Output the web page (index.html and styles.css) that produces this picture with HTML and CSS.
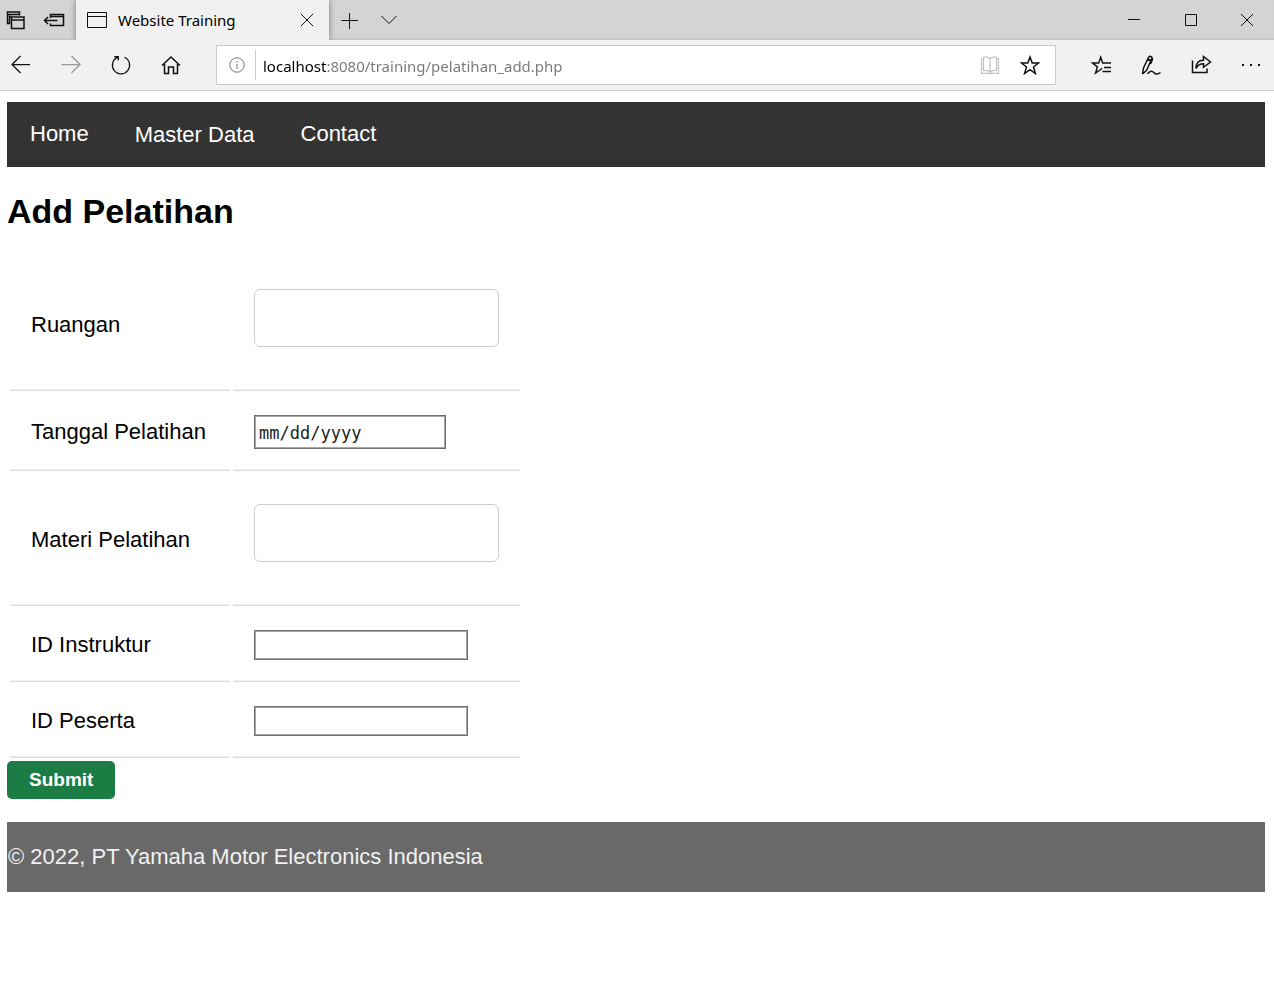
FILE: index.html
```html
<!DOCTYPE html>
<html lang="en">
<head>
<meta charset="utf-8">
<title>Website Training</title>
<link rel="stylesheet" href="styles.css">
</head>
<body>
<div class="tabstrip">
  <div class="tab-tools">
    <button class="icon-btn tab-tool" aria-label="Tabs you've set aside">
      <svg width="20" height="20" viewBox="0 0 20 20"><path class="bold" d="M3.500 9V13.500H1.500V2H13.500V5.500M1.500 4.500H13.500M3.500 13.500V6.500H5.500M5.500 7H18V18.500H5.500zM5.500 10H18"/></svg>
    </button>
    <button class="icon-btn tab-tool" aria-label="Set these tabs aside">
      <svg width="22" height="20" viewBox="0 0 22 20"><path class="bold" d="M7.500 8V4.500H20.500V15.500H7.500V13.500M7.500 6.500H20.500M1.500 10.500H14.500M5 7L1.500 10.500L5 14"/></svg>
    </button>
  </div>
  <div class="tab">
    <svg class="page-icon" width="22" height="18" viewBox="0 0 22 18"><path d="M1.500 1.500H20.500V16.500H1.500zM1.500 5.500H20.500"/></svg>
    <span class="tab-title">Website Training</span>
    <button class="icon-btn" aria-label="Close tab">
      <svg width="14" height="14" viewBox="0 0 14 14"><path d="M.8.800L13.200 13.200M13.200.800L.8 13.200"/></svg>
    </button>
  </div>
  <button class="icon-btn strip-btn" aria-label="New tab">
    <svg width="18" height="18" viewBox="0 0 18 18"><path d="M9.500 2V18M1.500 9.500H18"/></svg>
  </button>
  <button class="icon-btn strip-btn" aria-label="Show tab previews">
    <svg width="18" height="18" viewBox="0 0 18 18"><path d="M1.500 5L9 12.500L16.500 5"/></svg>
  </button>
  <div class="window-buttons">
    <button class="icon-btn window-btn" aria-label="Minimize">
      <svg width="14" height="14" viewBox="0 0 14 14"><path d="M1 6.500H13"/></svg>
    </button>
    <button class="icon-btn window-btn" aria-label="Maximize">
      <svg width="14" height="14" viewBox="0 0 14 14"><path d="M1.500 1.500H12.500V12.500H1.500z"/></svg>
    </button>
    <button class="icon-btn window-btn" aria-label="Close">
      <svg width="14" height="14" viewBox="0 0 14 14"><path d="M1 1L13 13M13 1L1 13"/></svg>
    </button>
  </div>
</div>

<div class="toolbar">
  <div class="nav-buttons">
    <button class="icon-btn tool-btn" aria-label="Back">
      <svg width="22" height="22" viewBox="0 0 22 22"><path class="medium" d="M20 10.500H2M10.500 2L2 10.500L10.500 19"/></svg>
    </button>
    <button class="icon-btn tool-btn faded" aria-label="Forward" disabled>
      <svg width="22" height="22" viewBox="0 0 22 22"><path class="medium" d="M1.500 10.500H20M11.500 2L20 10.500L11.500 19"/></svg>
    </button>
    <button class="icon-btn tool-btn" aria-label="Refresh">
      <svg width="22" height="22" viewBox="0 0 22 22"><path class="medium" d="M14.500 3.300A8.600 8.600 0 1 1 7.800 3.200L5.200 5M4.200 2.500H8.300V6.500"/></svg>
    </button>
    <button class="icon-btn tool-btn" aria-label="Home">
      <svg width="22" height="22" viewBox="0 0 22 22"><path class="bold" d="M2 11.500L11 3L20 11.500M4.500 10V19.500H8.500V13H13.500V19.500H17.500V10"/></svg>
    </button>
  </div>
  <div class="address">
    <svg class="info-icon" width="16" height="16" viewBox="0 0 16 16"><circle cx="8" cy="8" r="7.200"/><path d="M8 7V12M8 4V5.500"/></svg>
    <input class="url" type="text" aria-label="Address" value="localhost:8080/training/pelatihan_add.php">
    <button class="icon-btn address-btn pale" aria-label="Reading view">
      <svg width="20" height="20" viewBox="0 0 20 20"><path class="medium" d="M10 3.500V17.500M10 3.500C8 1.700 5 1.700 3.500 2.500V15.500C6 15 8.500 15.500 10 17C11.500 15.500 14 15 16.500 15.500V2.500C15 1.700 12 1.700 10 3.500M3.500 3.500H1.500V18.300H18.500V3.500H16.500"/></svg>
    </button>
    <button class="icon-btn address-btn" aria-label="Add to favorites">
      <svg width="20" height="20" viewBox="0 0 20 20"><path class="bold" d="M10 2L12.200 8H18.600L13.500 12L15.400 18.500L10 14.600L4.600 18.500L6.500 12L1.400 8H7.800z"/></svg>
    </button>
  </div>
  <div class="actions">
    <button class="icon-btn action-btn" aria-label="Favorites">
      <svg width="22" height="20" viewBox="0 0 22 20"><path class="bold" d="M13 8H21M14 12.500H21M12.500 16.500H21M13 8H12.700L10.700 2.300L8.700 8H2.600L7.400 11.800L5.600 18L10.700 14.500L12 13.300"/></svg>
    </button>
    <button class="icon-btn action-btn" aria-label="Add notes">
      <svg width="22" height="22" viewBox="0 0 22 22"><path class="bold" d="M2.500 20L3.500 14L8.500 3.500C9.500 1.500 12.500 2.500 11.700 4.800L6.500 16.500L2.500 20M7.800 5L11 6.500M11.500 3.500C13.300 4 12.500 6 10.500 10M7.500 19.800C10 16.500 12 16.500 13.800 18.500S18 20.500 20.500 18.500"/></svg>
    </button>
    <button class="icon-btn action-btn" aria-label="Share">
      <svg width="22" height="22" viewBox="0 0 22 22"><path class="bold" d="M1.500 6.500V18.500H16V14.500M5 14.500C5 9.500 7.500 6.300 12.500 6.300V2.500L19.500 8L12.500 13.300V9.800C9 9.800 7 10.500 5 14.500z"/></svg>
    </button>
    <button class="icon-btn action-btn" aria-label="Settings and more">
      <svg width="20" height="20" viewBox="0 0 20 20"><path class="dots" d="M1 9h2v2h-2zM9 9h2v2h-2zM17 9h2v2h-2z"/></svg>
    </button>
  </div>
</div>

<main class="page">
  <nav class="menu">
    <a href="#">Home</a>
    <button class="menu-drop" type="button">Master Data</button>
    <a href="#">Contact</a>
  </nav>

  <h2 class="title">Add Pelatihan</h2>

  <form class="form">
    <table class="fields">
      <tr>
        <td class="label-cell"><label for="ruangan">Ruangan</label></td>
        <td><input class="field-wide" type="text" id="ruangan"></td>
      </tr>
      <tr>
        <td class="label-cell"><label for="tanggal">Tanggal Pelatihan</label></td>
        <td><input class="field field-date" type="date" id="tanggal"></td>
      </tr>
      <tr>
        <td class="label-cell"><label for="materi">Materi Pelatihan</label></td>
        <td><input class="field-wide" type="text" id="materi"></td>
      </tr>
      <tr>
        <td class="label-cell"><label for="instruktur">ID Instruktur</label></td>
        <td><input class="field field-id" type="number" id="instruktur"></td>
      </tr>
      <tr>
        <td class="label-cell"><label for="peserta">ID Peserta</label></td>
        <td><input class="field field-id" type="number" id="peserta"></td>
      </tr>
    </table>
    <button class="submit" type="submit">Submit</button>
  </form>

  <footer class="footer">© 2022, PT Yamaha Motor Electronics Indonesia</footer>
</main>
</body>
</html>
```
FILE: styles.css
```css
* {
  box-sizing: border-box;
}

body {
  margin: 0;
  background: #fff;
  color: #000;
  font-family: "Liberation Sans", Arial, sans-serif;
  font-size: 22px;
}

svg {
  display: block;
  flex: none;
  fill: none;
  stroke: #111;
  stroke-width: 1;
}

.bold {
  stroke-width: 1.5;
}

.medium {
  stroke-width: 1.25;
}

.dots {
  fill: #111;
  stroke: none;
}

.icon-btn {
  display: flex;
  align-items: center;
  justify-content: center;
  padding: 0;
  border: 0;
  background: none;
}

/* Browser tab strip */
.tabstrip {
  display: flex;
  height: 40px;
  background: #d4d4d4;
  box-shadow: inset 0 -2px 2px -1px #bbb;
}

.tab-tools {
  display: flex;
  width: 76px;
}

.tab-tool {
  width: 44px;
  height: 40px;
}

.tab-tool:first-child {
  width: 32px;
}

.tab {
  display: flex;
  align-items: center;
  width: 253px;
  padding: 0 15px 0 10px;
  background: #f1f1f1;
  box-shadow: 0 0 6px #777;
  clip-path: inset(0 -8px 0 -8px);
}

.page-icon {
  margin-right: 10px;
}

.tab-title {
  flex: 1;
  font-family: "Noto Sans", sans-serif;
  font-size: 15px;
  line-height: 20px;
}

.strip-btn {
  width: 40px;
  height: 40px;
}

.window-buttons {
  display: flex;
  margin-left: auto;
}

.window-btn {
  width: 57px;
  height: 40px;
}

.window-btn:last-child {
  width: 55px;
}

/* Browser toolbar */
.toolbar {
  display: flex;
  align-items: center;
  height: 51px;
  border-bottom: 1px solid #ccc;
  background: #f1f1f1;
}

.nav-buttons {
  display: flex;
  width: 216px;
  padding-left: 10px;
  gap: 28px;
}

.faded svg {
  stroke: #999;
}

.address {
  display: flex;
  flex: 1;
  align-items: center;
  height: 40px;
  padding: 0 15px 0 12px;
  border: 1px solid #ccc;
  background: #fff;
}

.info-icon {
  stroke: #777;
}

.url {
  flex: 1;
  min-width: 0;
  height: 30px;
  margin-left: 10px;
  padding: 2px 0 0 7px;
  border: 0;
  border-left: 1px solid #ccc;
  outline: 0;
  background: linear-gradient(to right, #000 71px, #777 71px) text;
  color: transparent;
  font-family: "Noto Sans", sans-serif;
  font-size: 15px;
}

.address-btn {
  width: 20px;
  height: 30px;
  margin-left: 20px;
}

.pale svg {
  stroke: #c4c4c4;
}

.actions {
  display: flex;
  align-items: center;
  width: 218px;
  padding: 0 13px 0 34px;
  justify-content: space-between;
}

/* Page */
.page {
  padding: 11px 9px 0 7px;
}

.menu {
  display: flex;
  height: 65px;
  background: #333;
}

.menu a,
.menu-drop {
  padding: 19px 23px 0;
  border: 0;
  background: none;
  color: #fff;
  font: inherit;
  line-height: 25px;
  text-decoration: none;
}

.menu-drop {
  display: flex;
  padding-top: 20px;
}

.title {
  margin: 24px 0 25px;
  font-size: 34px;
  line-height: 40px;
}

.fields {
  border-spacing: 3px;
}

.fields td {
  padding: 21px;
  border-bottom: 1px solid #ddd;
  box-shadow: inset 0 -1px #f0f0f0;
}

.fields .label-cell {
  width: 220px;
}

.field,
.field-wide {
  display: block;
  background: #fff;
  font: inherit;
}

.field-wide {
  width: 245px;
  height: 58px;
  margin: 9px 0 22px;
  padding: 16px 28px;
  border: 1px solid #ccc;
  border-radius: 6px;
}

.field {
  border: 1px solid #6f6f6f;
  box-shadow: inset 0 0 0 1px #a6a6a6;
}

.field-date {
  width: 192px;
  height: 34px;
  padding: 2px 4px 0;
  color: #222;
  font-family: "DejaVu Sans Mono", monospace;
  font-size: 17px;
}

.field-date::-webkit-calendar-picker-indicator {
  display: none;
}

.field-date::-webkit-datetime-edit-month-field,
.field-date::-webkit-datetime-edit-day-field,
.field-date::-webkit-datetime-edit-year-field {
  padding: 0;
}

.field-id {
  width: 214px;
  height: 30px;
}

.submit {
  display: block;
  height: 38px;
  padding: 0 22px;
  border: 0;
  border-radius: 5px;
  background: #1b7c44;
  color: #fff;
  font-family: inherit;
  font-size: 19px;
  font-weight: bold;
}

.footer {
  margin-top: 23px;
  padding: 22px 1px 23px;
  background: #696969;
  color: #f1f1f1;
  line-height: 25px;
}
```
